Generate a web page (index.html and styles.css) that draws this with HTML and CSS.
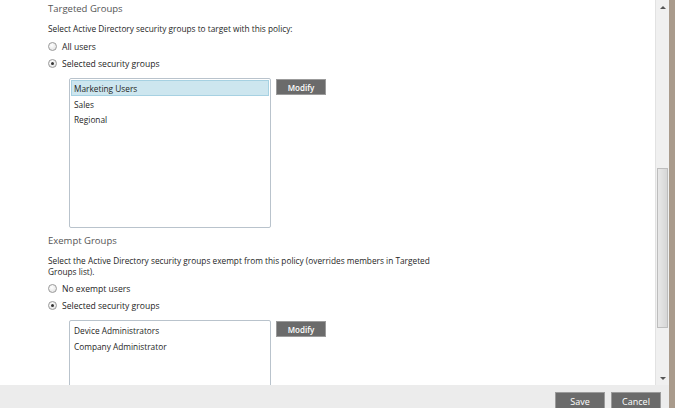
FILE: index.html
```html
<!DOCTYPE html>
<html>
<head>
<meta charset="utf-8">
<link rel="stylesheet" href="styles.css">
</head>
<body>
<div class="page">
  <div class="main">
    <div class="scroller">
      <div class="content">
        <div class="section-title">Targeted Groups</div>
        <div class="desc first">Select Active Directory security groups to target with this policy:</div>
        <div class="radio-row"><span class="radio"></span><span class="radio-label">All users</span></div>
        <div class="radio-row"><span class="radio checked"></span><span class="radio-label">Selected security groups</span></div>
        <div class="list-row">
          <div class="listbox tall">
            <div class="item selected">Marketing Users</div>
            <div class="item">Sales</div>
            <div class="item">Regional</div>
          </div>
          <button class="btn modify">Modify</button>
        </div>
        <div class="section-title second">Exempt Groups</div>
        <div class="desc wrap">Select the Active Directory security groups exempt from this policy (overrides members in Targeted Groups list).</div>
        <div class="radio-row"><span class="radio"></span><span class="radio-label">No exempt users</span></div>
        <div class="radio-row"><span class="radio checked"></span><span class="radio-label">Selected security groups</span></div>
        <div class="list-row">
          <div class="listbox tall">
            <div class="item">Device Administrators</div>
            <div class="item">Company Administrator</div>
          </div>
          <button class="btn modify">Modify</button>
        </div>
      </div>
      <div class="scrollbar">
        <div class="arrow up"></div>
        <div class="track"><div class="thumb"></div></div>
        <div class="arrow down"></div>
      </div>
    </div>
    <div class="footer">
      <button class="btn action">Save</button>
      <button class="btn action">Cancel</button>
    </div>
  </div>
  <div class="edge"></div>
</div>
</body>
</html>
```

FILE: styles.css
```css
html, body {
  margin: 0;
  padding: 0;
  background: #ffffff;
}
body {
  font-family: "Open Sans", "Liberation Sans", sans-serif;
  color: #262626;
}
.page {
  display: flex;
  width: 675px;
  height: 408px;
  overflow: hidden;
}
.main {
  flex: 1;
  display: flex;
  flex-direction: column;
}
.scroller {
  height: 385px;
  display: flex;
  overflow: hidden;
}
.content {
  flex: 1;
  padding-left: 48px;
  padding-top: 1px;
}
.section-title {
  font-size: 9.5px;
  color: #555555;
  line-height: 14px;
  margin-top: 1px;
}
.section-title.second {
  margin-top: 6px;
}
.desc {
  font-size: 8.3px;
  line-height: 11px;
  margin-top: 7px;
  margin-bottom: 3px;
  width: 392px;
}
.desc.first {
  margin-bottom: 4px;
}
.desc.wrap {
  margin-bottom: 3px;
}
.radio-row {
  display: flex;
  align-items: center;
  height: 17px;
}
.radio {
  width: 9px;
  height: 9px;
  border-radius: 50%;
  border: 1px solid #9a9a9a;
  background: radial-gradient(circle at 40% 35%, #ffffff 0%, #e4e4e4 80%);
  box-sizing: border-box;
  display: flex;
  align-items: center;
  justify-content: center;
  margin-right: 5px;
}
.radio.checked::after {
  content: "";
  width: 3px;
  height: 3px;
  border-radius: 50%;
  background: #333333;
}
.radio-label {
  font-size: 8.6px;
  color: #1e1e1e;
}
.list-row {
  display: flex;
  align-items: flex-start;
  margin-left: 21px;
  margin-top: 6px;
}
.listbox {
  width: 202px;
  box-sizing: border-box;
  border: 1px solid #b9c3cc;
  border-radius: 2px;
  padding: 1px;
  background: #fff;
}
.listbox.tall {
  height: 150px;
}
.item {
  font-size: 8.3px;
  height: 15.5px;
  line-height: 15px;
  padding-left: 2px;
  box-sizing: border-box;
  border: 1px solid transparent;
}
.item.selected {
  background: #cde6ef;
  border-color: #a6d1e2;
}
.btn {
  font-family: inherit;
  background: #6b6b6b;
  color: #ffffff;
  border: 1px solid #9b9b9b;
  font-size: 8px;
  font-weight: 600;
  padding: 0;
  box-sizing: border-box;
}
.modify {
  width: 50px;
  height: 16px;
  margin-left: 5px;
  margin-top: 1px;
}
.scrollbar {
  width: 13px;
  background: #f0f0f0;
  border-left: 1px solid #e2e2e2;
  display: flex;
  flex-direction: column;
}
.arrow {
  height: 14px;
  display: flex;
  align-items: center;
  justify-content: center;
}
.arrow::after {
  content: "";
  width: 0;
  height: 0;
  border-left: 3px solid transparent;
  border-right: 3px solid transparent;
}
.arrow.up::after {
  border-bottom: 3px solid #555;
}
.arrow.down::after {
  border-top: 3px solid #555;
}
.track {
  flex: 1;
  position: relative;
}
.thumb {
  position: absolute;
  left: 1px;
  right: 1px;
  top: 154px;
  height: 160px;
  background: linear-gradient(to right, #e8e8e8, #d6d6d6);
  border: 1px solid #bdbdbd;
  box-sizing: border-box;
}
.footer {
  height: 23px;
  background: #ececec;
  display: flex;
  justify-content: flex-end;
  align-items: flex-start;
  padding-right: 8px;
  padding-top: 7px;
  gap: 6px;
  box-sizing: border-box;
}
.action {
  width: 50px;
  height: 18px;
  font-size: 9px;
  font-weight: 400;
}
.edge {
  width: 6px;
  background: #a99b8c;
}
```
